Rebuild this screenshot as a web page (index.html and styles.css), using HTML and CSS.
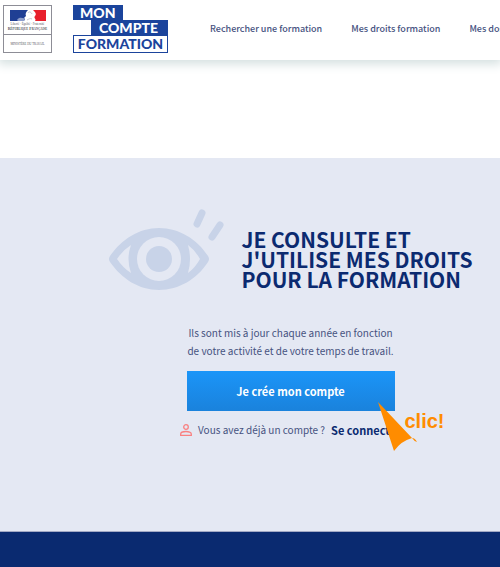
FILE: index.html
```
<!DOCTYPE html>
<html lang="fr">
<head>
<meta charset="UTF-8">
<meta name="viewport" content="width=device-width, initial-scale=1.0">
<title>Mon Compte Formation</title>
<link rel="stylesheet" href="styles.css">
</head>
<body>

<header class="header">
  <div class="ministry">
    <svg class="flag" width="36" height="12" viewBox="0 0 36 12" aria-hidden="true">
      <path d="M0 0H18C16 2 15 4 16 6L14 8L15 9L14 11H0Z" fill="#1f3f94"/>
      <path d="M7 10C10 6 13 9 15 8L14 11H8Z" fill="#8c9dcb"/>
      <path d="M23 0H36V11H25C27 9 23 8 25 6C27 4 25 2 23 0Z" fill="#e8202c"/>
      <path d="M18 3C19 1 21 2 22 4M17 10C19 9 20 8 22 9" fill="none" stroke="#c3c6d2"/>
    </svg>
    <p class="motto">Liberté · Égalité · Fraternité</p>
    <p class="republic">République Française</p>
    <p class="department">MINISTÈRE DU TRAVAIL</p>
  </div>
  <a class="logo" href="#">
    <span class="logo-mon">MON</span>
    <span class="logo-compte">COMPTE</span>
    <span class="logo-formation">FORMATION</span>
  </a>
  <nav class="nav">
    <a href="#">Rechercher une formation</a>
    <a href="#">Mes droits formation</a>
    <a href="#">Mes dossiers</a>
  </nav>
</header>

<main class="hero">
  <div class="hero-title">
    <svg class="eye" width="116" height="82" viewBox="0 0 116 82" aria-hidden="true">
      <path d="M2 47C14 30 31 19 51 19S89 30 100 47Q102 50 100 53C89 70 71 81 51 81S14 70 2 53Q0 50 2 47Z" fill="#c8d3e8"/>
      <path d="M9 50Q15 41 23 36Q18 50 23 64Q15 59 9 50ZM92 50Q87 41 80 36Q84 50 80 64Q87 59 92 50Z" fill="#e4e8f3"/>
      <circle cx="51" cy="50" r="22" fill="#e4e8f3"/>
      <circle cx="51" cy="50" r="13" fill="#c8d3e8"/>
      <path d="M94 4L89 15M112 16L104 28" fill="none" stroke="#c8d3e8" stroke-width="7" stroke-linecap="round"/>
    </svg>
    <h1>JE CONSULTE ET<br>J'UTILISE MES DROITS<br>POUR LA FORMATION</h1>
  </div>
  <p class="intro">Ils sont mis à jour chaque année en fonction<br>de votre activité et de votre temps de travail.</p>
  <div class="actions">
    <button class="create" type="button">Je crée mon compte</button>
    <div class="pointer">
      <svg width="42" height="50" viewBox="0 0 42 50" aria-hidden="true">
        <path d="M1 0L35 36Q24 39 17 49Z" fill="#ff8c00"/>
        <path d="M35 36Q38 36 40 40Q37 39 35 36Z" fill="#ff8c00"/>
      </svg>
      <span>clic!</span>
    </div>
  </div>
  <p class="login">
    <svg width="12" height="12" viewBox="0 0 12 12" aria-hidden="true">
      <circle cx="6" cy="3" r="2.3" fill="none" stroke="#f98080" stroke-width="1.3"/>
      <path d="M.7 11.3V10C.7 8.4 3.5 7.5 6 7.5S11.3 8.4 11.3 10V11.3Z" fill="none" stroke="#f98080" stroke-width="1.3"/>
    </svg>
    <span>Vous avez déjà un compte ?</span>
    <a href="#">Se connecter</a>
  </p>
</main>

<footer class="footer"></footer>

</body>
</html>
```
FILE: styles.css
```
* {
  box-sizing: border-box;
}

body {
  display: flex;
  flex-direction: column;
  min-height: 100vh;
  margin: 0;
  overflow-x: hidden;
  background: #fff;
  color: #46527f;
  font-family: "Noto Sans CJK SC", "Open Sans", sans-serif;
  font-size: 10px;
}

h1, p {
  margin: 0;
}

a {
  color: inherit;
  text-decoration: none;
}

.header {
  display: flex;
  align-items: flex-start;
  height: 60px;
  padding: 5px 0 0 3px;
  box-shadow: 0 2px 10px 2px #d3dfdf;
}

.ministry {
  flex: none;
  width: 49px;
  height: 48px;
  padding-top: 4px;
  border: 1px solid #8d8d96;
  color: #55555c;
  font-family: "Liberation Serif", serif;
  text-align: center;
  white-space: nowrap;
}

.flag {
  display: block;
  margin: 0 auto;
}

.motto {
  font-size: 3px;
  line-height: 4px;
}

.republic {
  height: 9px;
  border-bottom: 1px solid #8d8d96;
  font-size: 4px;
  font-variant: small-caps;
  font-weight: bold;
  line-height: 5px;
}

.department {
  font-size: 3px;
  line-height: 18px;
}

.logo {
  display: flex;
  flex: none;
  flex-direction: column;
  width: 95px;
  margin-left: 21px;
  color: #fff;
  font-family: Lato, sans-serif;
  font-size: 14px;
  font-weight: 900;
  line-height: 15px;
}

.logo-mon {
  align-self: flex-start;
  width: 50px;
  padding-left: 7px;
  background: #1b449c;
}

.logo-compte {
  align-self: flex-end;
  width: 77px;
  padding-left: 8px;
  background: #1b449c;
}

.logo-formation {
  border: 1px solid #1b449c;
  color: #1b449c;
  line-height: 16px;
  text-align: center;
}

.nav {
  display: flex;
  gap: 29px;
  margin-left: 42px;
  font-size: 9px;
  font-weight: 500;
  line-height: 48px;
  white-space: nowrap;
}

.hero {
  display: flex;
  flex-direction: column;
  align-items: center;
  margin-top: 98px;
  padding: 51px 0 91px 81px;
  border-bottom: 1px solid #a3a9c4;
  background: #e4e8f3;
  white-space: nowrap;
}

.hero-title {
  display: flex;
  align-items: flex-end;
  gap: 17px;
}

.eye {
  flex: none;
}

.hero h1 {
  padding-bottom: 2px;
  color: #0b2a70;
  font-size: 21px;
  font-weight: 700;
  line-height: 20px;
}

.intro {
  margin-top: 33px;
  line-height: 18px;
  text-align: center;
}

.actions {
  position: relative;
  margin-top: 11px;
}

.create {
  display: block;
  width: 208px;
  height: 40px;
  border: 0;
  background: linear-gradient(#1b95f8, #1a82dc);
  color: #fff;
  font-family: inherit;
  font-size: 11px;
  font-weight: 700;
  cursor: pointer;
}

/* hint arrow drawn over the button and the login link */
.pointer {
  position: absolute;
  top: 31px;
  left: 190px;
  display: flex;
  color: #ff8c00;
  font-family: "Liberation Sans", sans-serif;
  font-size: 20px;
  font-weight: 700;
  line-height: 38px;
  pointer-events: none;
}

.pointer span {
  margin-left: -14px;
}

.pointer svg {
  flex: none;
}

.login {
  display: flex;
  align-items: center;
  gap: 6px;
  margin-top: 9px;
  line-height: 20px;
}

.login a {
  color: #0b2a70;
  font-size: 11px;
  font-weight: 700;
}

.footer {
  flex: 1;
  min-height: 34px;
  background: #0a2a70;
}
```
